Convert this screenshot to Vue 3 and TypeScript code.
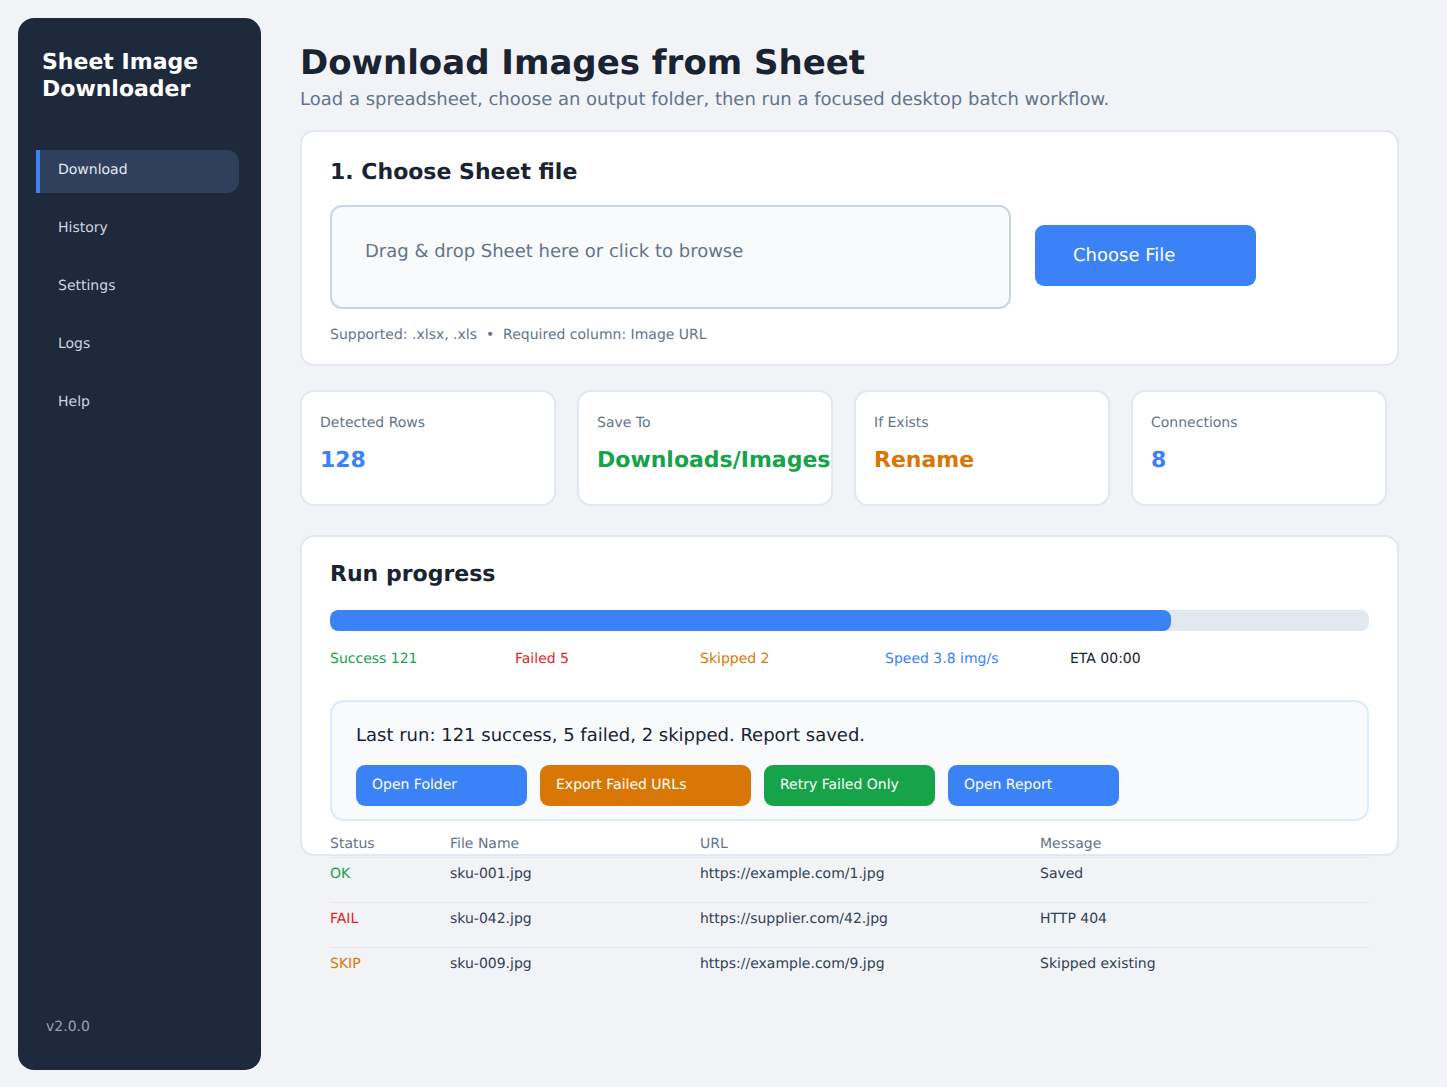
<script setup lang="ts">
const navItems = ['Download', 'History', 'Settings', 'Logs', 'Help']

const stats = [
  { label: 'Detected Rows', value: '128', tone: 'blue' },
  { label: 'Save To', value: 'Downloads/Images', tone: 'green' },
  { label: 'If Exists', value: 'Rename', tone: 'orange' },
  { label: 'Connections', value: '8', tone: 'blue' }
]

const counters = [
  { text: 'Success 121', tone: 'green' },
  { text: 'Failed 5', tone: 'red' },
  { text: 'Skipped 2', tone: 'orange' },
  { text: 'Speed 3.8 img/s', tone: 'blue' },
  { text: 'ETA 00:00', tone: 'dark' }
]

const actions = [
  { text: 'Open Folder', tone: 'blue', width: 171 },
  { text: 'Export Failed URLs', tone: 'orange', width: 211 },
  { text: 'Retry Failed Only', tone: 'green', width: 171 },
  { text: 'Open Report', tone: 'blue', width: 171 }
]

const rows = [
  { status: 'OK', tone: 'green', file: 'sku-001.jpg', url: 'https://example.com/1.jpg', message: 'Saved' },
  { status: 'FAIL', tone: 'red', file: 'sku-042.jpg', url: 'https://supplier.com/42.jpg', message: 'HTTP 404' },
  { status: 'SKIP', tone: 'orange', file: 'sku-009.jpg', url: 'https://example.com/9.jpg', message: 'Skipped existing' }
]
</script>

<template>
  <div class="app">
    <aside class="sidebar">
      <h2 class="sidebar__title">Sheet Image<br />Downloader</h2>
      <nav class="sidebar__nav">
        <div
          v-for="(item, i) in navItems"
          :key="item"
          class="nav-item"
          :class="{ 'nav-item--active': i === 0 }"
        >
          {{ item }}
        </div>
      </nav>
      <div class="sidebar__version">v2.0.0</div>
    </aside>

    <main class="main">
      <h1 class="main__title">Download Images from Sheet</h1>
      <p class="main__subtitle">Load a spreadsheet, choose an output folder, then run a focused desktop batch workflow.</p>

      <section class="panel panel--file">
        <h3 class="panel__title">1. Choose Sheet file</h3>
        <div class="file-row">
          <div class="dropzone">Drag &amp; drop Sheet here or click to browse</div>
          <button class="choose-btn">Choose File</button>
        </div>
        <p class="file-hint">Supported: .xlsx, .xls &nbsp;•&nbsp; Required column: Image URL</p>
      </section>

      <section class="stats">
        <div v-for="stat in stats" :key="stat.label" class="stat">
          <div class="stat__label">{{ stat.label }}</div>
          <div class="stat__value" :class="`tone-${stat.tone}`">{{ stat.value }}</div>
        </div>
      </section>

      <section class="panel panel--progress">
        <h3 class="panel__title">Run progress</h3>
        <div class="bar">
          <div class="bar__fill" :style="{ width: '80.9%' }"></div>
        </div>
        <div class="counters">
          <span v-for="c in counters" :key="c.text" class="counter" :class="`tone-${c.tone}`">{{ c.text }}</span>
        </div>
        <div class="summary">
          <div class="summary__text">Last run: 121 success, 5 failed, 2 skipped. Report saved.</div>
          <div class="summary__actions">
            <button
              v-for="a in actions"
              :key="a.text"
              class="action"
              :class="`action--${a.tone}`"
              :style="{ width: a.width + 'px' }"
            >
              {{ a.text }}
            </button>
          </div>
        </div>
        <div class="table">
          <div class="table__row table__row--head">
            <span>Status</span>
            <span>File Name</span>
            <span>URL</span>
            <span>Message</span>
          </div>
          <div v-for="row in rows" :key="row.file" class="table__row">
            <span :class="`tone-${row.tone}`">{{ row.status }}</span>
            <span>{{ row.file }}</span>
            <span>{{ row.url }}</span>
            <span>{{ row.message }}</span>
          </div>
        </div>
      </section>
    </main>
  </div>
</template>

<style>
html,
body {
  margin: 0;
  background: #f1f3f7;
}
</style>

<style scoped>
.app {
  display: flex;
  box-sizing: border-box;
  height: 1087px;
  overflow: hidden;
  padding: 18px 0 17px 18px;
  font-family: 'DejaVu Sans', sans-serif;
  text-rendering: geometricPrecision;
  color: #1a2332;
}

.sidebar {
  display: flex;
  flex-direction: column;
  flex: none;
  box-sizing: border-box;
  width: 243px;
  padding: 31px 22px 35px 18px;
  background: #1e293b;
  border-radius: 16px;
}

.sidebar__title {
  margin: 0 0 47px 6px;
  font-size: 22px;
  line-height: 27px;
  font-weight: 700;
  color: #fff;
}

.sidebar__nav {
  display: flex;
  flex-direction: column;
  gap: 15px;
}

.nav-item {
  box-sizing: border-box;
  height: 43px;
  padding: 0 0 4px 22px;
  display: flex;
  align-items: center;
  font-size: 14px;
  color: #cbd5e1;
}

.nav-item--active {
  padding-left: 18px;
  background: #2f3f5c;
  border-left: 4px solid #3b82f6;
  border-radius: 0 12px 12px 0;
  color: #e2e8f0;
}

.sidebar__version {
  margin-top: auto;
  margin-left: 10px;
  font-size: 14px;
  line-height: 16px;
  color: #94a3b8;
}

.main {
  flex: none;
  width: 1099px;
  margin-left: 39px;
  padding-top: 23px;
}

.main__title {
  margin: 0;
  font-size: 34px;
  line-height: 44px;
  font-weight: 700;
}

.main__subtitle {
  margin: 4px 0 19px;
  font-size: 18px;
  line-height: 22px;
  color: #64748b;
}

.panel {
  box-sizing: border-box;
  padding: 26px 28px 0;
  background: #fff;
  border: 2px solid #e2e8f0;
  border-radius: 14px;
}

.panel--file {
  height: 236px;
}

.panel--progress {
  height: 321px;
  padding-top: 23px;
}

.panel__title {
  margin: 0;
  font-size: 22px;
  line-height: 30px;
  font-weight: 700;
}

.file-row {
  display: flex;
  align-items: center;
  gap: 24px;
  margin-top: 17px;
}

.dropzone {
  box-sizing: border-box;
  width: 681px;
  height: 104px;
  padding: 33px 33px 0;
  background: #f8fafc;
  border: 2px solid #cbd5e1;
  border-radius: 12px;
  font-size: 18px;
  line-height: 24px;
  color: #64748b;
}

.choose-btn {
  box-sizing: border-box;
  width: 221px;
  height: 61px;
  margin-bottom: 4px;
  padding: 0 0 0 38px;
  text-align: left;
  background: #3b82f6;
  border: 0;
  border-radius: 9px;
  font-family: inherit;
  font-size: 18px;
  text-rendering: inherit;
  color: #fff;
}

.file-hint {
  margin: 17px 0 0;
  font-size: 14px;
  line-height: 18px;
  color: #64748b;
}

.stats {
  display: grid;
  grid-template-columns: repeat(4, 256px);
  gap: 21px;
  margin: 24px 0 29px;
}

.stat {
  box-sizing: border-box;
  height: 116px;
  padding: 22px 18px 0;
  background: #fff;
  border: 2px solid #e2e8f0;
  border-radius: 14px;
}

.stat__label {
  font-size: 14px;
  line-height: 18px;
  color: #64748b;
}

.stat__value {
  margin-top: 15px;
  font-size: 22px;
  line-height: 28px;
  font-weight: 700;
  white-space: nowrap;
}

.bar {
  height: 21px;
  margin-top: 20px;
  background: #e2e8f0;
  border-radius: 8px;
  overflow: hidden;
}

.bar__fill {
  height: 100%;
  background: #3b82f6;
  border-radius: 8px;
}

.counters {
  display: flex;
  margin-top: 19px;
}

.counter {
  flex: none;
  width: 185px;
  font-size: 14px;
  line-height: 18px;
}

.summary {
  box-sizing: border-box;
  height: 121px;
  margin-top: 32px;
  padding: 22px 24px 0;
  background: #f8fafc;
  border: 2px solid #dbeafe;
  border-radius: 14px;
}

.summary__text {
  font-size: 18px;
  line-height: 24px;
}

.summary__actions {
  display: flex;
  gap: 13px;
  margin-top: 17px;
}

.action {
  height: 41px;
  padding: 0 0 2px 16px;
  text-align: left;
  border: 0;
  border-radius: 9px;
  font-family: inherit;
  font-size: 14px;
  text-rendering: inherit;
  color: #fff;
}

.action--blue {
  background: #3b82f6;
}

.action--orange {
  background: #d97706;
}

.action--green {
  background: #16a34a;
}

.table {
  margin-top: 14px;
}

.table__row {
  display: grid;
  grid-template-columns: 120px 250px 340px 1fr;
  box-sizing: border-box;
  height: 45px;
  padding-top: 7px;
  border-top: 1px solid #e2e8f0;
  font-size: 14px;
  line-height: 18px;
  color: #334155;
}

.table__row--head {
  height: 22px;
  padding-top: 0;
  border-top: 0;
  color: #64748b;
}

.tone-blue {
  color: #3b82f6;
}

.tone-green {
  color: #16a34a;
}

.tone-orange {
  color: #d97706;
}

.tone-red {
  color: #dc2626;
}

.tone-dark {
  color: #1a2332;
}
</style>
